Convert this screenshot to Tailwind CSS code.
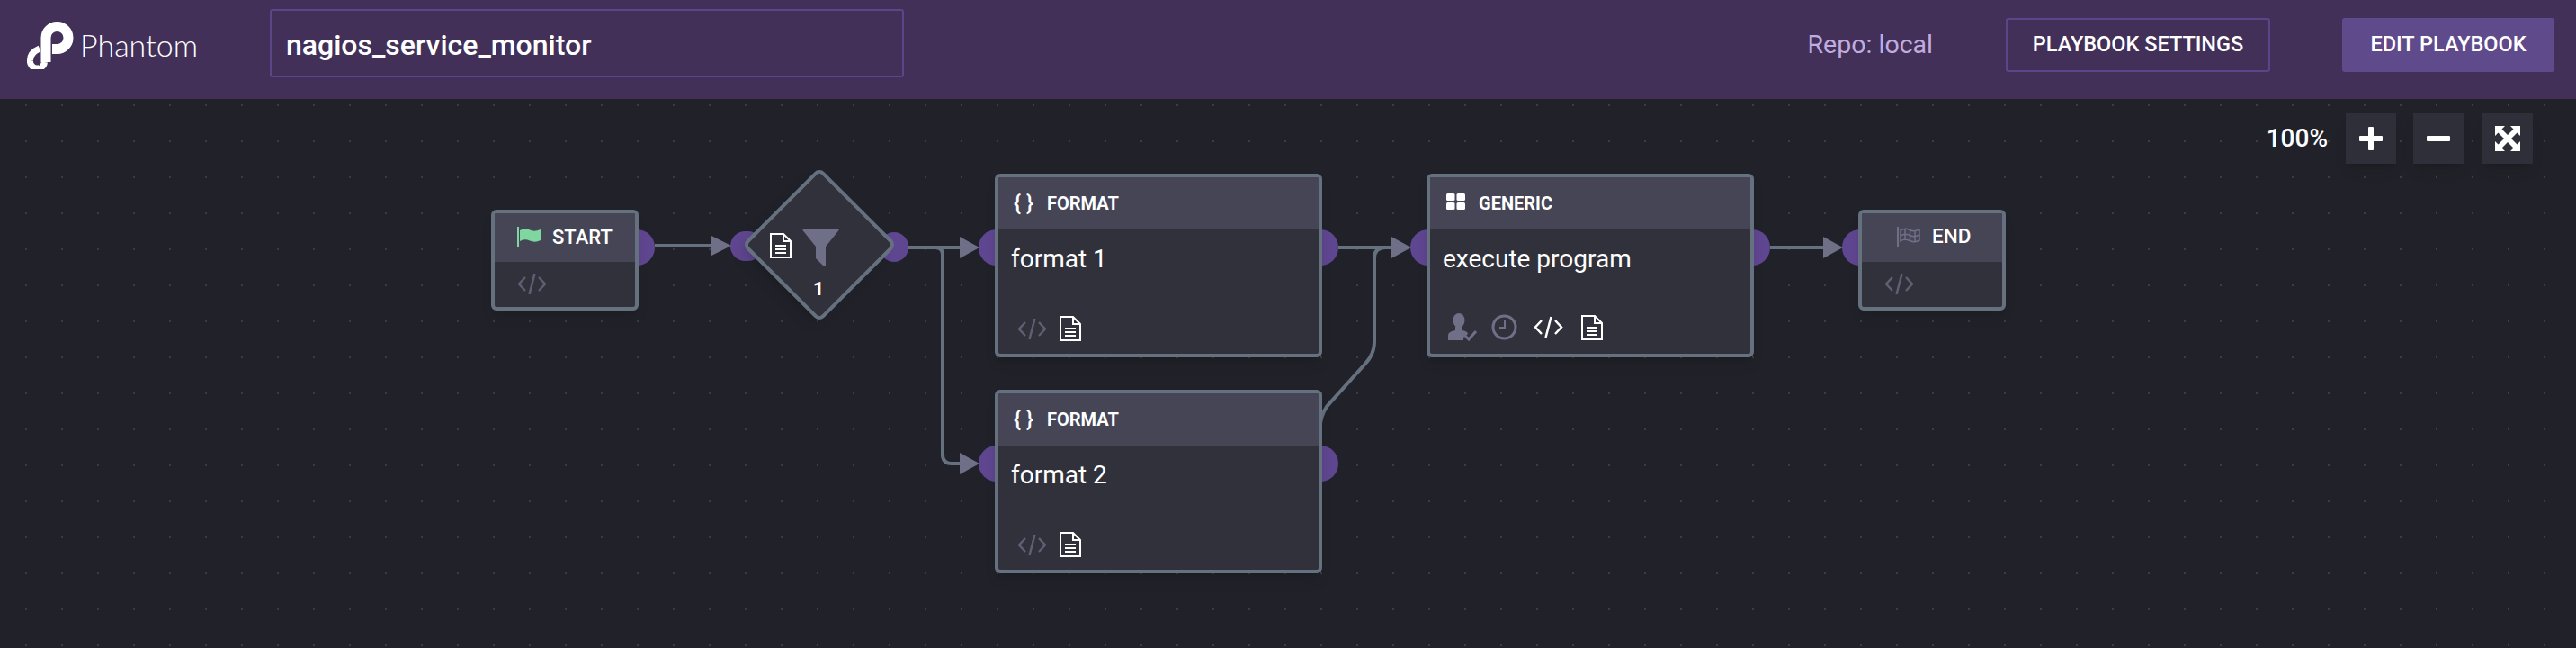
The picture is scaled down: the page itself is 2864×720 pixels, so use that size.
<!DOCTYPE html>
<html lang="en">
<head>
  <meta charset="UTF-8" />
  <title>Phantom playbook</title>
  <script src="https://cdn.jsdelivr.net/npm/@tailwindcss/browser@4"></script>
</head>
<body class="w-[2864px] h-[720px] overflow-hidden bg-[#212229] text-white font-['Roboto',sans-serif]">

  <!-- top bar -->
  <header class="h-[110px] bg-[#423059] flex items-center">
    <div class="w-[300px] shrink-0 flex items-center pl-[30px] mb-[10px]">
      <svg class="w-[52px] h-[54px] shrink-0" viewBox="0 0 52 54" fill="none" stroke="#fff">
        <path d="M3.500 44C3.500 38 7 34 14 31" stroke-width="7" />
        <path d="M3.500 44A8 8 0 0 0 19.500 46" stroke-width="7" />
        <path d="M21 46V19A12.500 12.500 0 1 1 33.500 31.500H28" stroke-width="11" />
        <path d="M13 36L14 50" stroke="#423059" stroke-width="1.500" />
      </svg>
      <span class="ml-[7px] text-[34px] leading-none font-light font-['Lato',sans-serif]">Phantom</span>
    </div>
    <div class="w-[705px] h-[76px] mb-[14px] border-2 border-[#5a4689] rounded-[3px] flex items-center pl-[16px] pt-[3px] text-[32px] font-medium">nagios_service_monitor</div>
    <span class="ml-auto mb-[10px] text-[#c0acdf] text-[28.500px]">Repo: local</span>
    <button class="ml-[81px] mb-[10px] w-[294px] h-[60px] border-2 border-[#5a4689] rounded-[3px] text-[23.500px] font-medium">PLAYBOOK SETTINGS</button>
    <button class="ml-[80px] mr-[24px] mb-[10px] w-[236px] h-[60px] bg-[#5f4b8b] rounded-[3px] text-[23.500px] font-medium">EDIT PLAYBOOK</button>
  </header>

  <!-- canvas -->
  <main class="relative h-[610px] bg-[radial-gradient(circle,#3b3d42_1px,transparent_1.5px)] bg-[size:40px_40px] bg-[position:9px_-13px]">

    <!-- zoom controls -->
    <div class="absolute top-[16px] right-[48px] flex items-center">
      <span class="mr-[20px] text-[28px] font-medium">100%</span>
      <button class="w-[56px] h-[56px] bg-[#2e2f38] shadow-lg flex items-center justify-center">
        <svg class="w-[26px] h-[26px]" viewBox="0 0 26 26" fill="#fff"><rect x="10" width="6" height="26" rx="1" /><rect y="10" width="26" height="6" rx="1" /></svg>
      </button>
      <button class="ml-[19px] w-[56px] h-[56px] bg-[#2e2f38] shadow-lg flex items-center justify-center">
        <svg class="w-[26px] h-[26px]" viewBox="0 0 26 26" fill="#fff"><rect y="10" width="26" height="6" rx="1" /></svg>
      </button>
      <button class="ml-[21px] w-[56px] h-[56px] bg-[#2e2f38] shadow-lg flex items-center justify-center">
        <svg class="w-[28px] h-[28px]" viewBox="0 0 28 28" fill="#fff">
          <path d="M0 0H11L7.500 3.500L14 10L20.500 3.500L17 0H28V11L24.500 7.500L18 14L24.500 20.500L28 17V28H17L20.500 24.500L14 18L7.500 24.500L11 28H0V17L3.500 20.500L10 14L3.500 7.500L0 11Z" />
        </svg>
      </button>
    </div>

    <!-- ports -->
    <div class="absolute left-[688px] top-[145px] w-[40px] h-[40px] rounded-full bg-[#5f4690]"></div>
    <div class="absolute left-[812px] top-[147px] w-[36px] h-[33px] rounded-full bg-[#5f4690]"></div>
    <div class="absolute left-[978px] top-[148px] w-[32px] h-[33px] rounded-full bg-[#5f4690]"></div>
    <div class="absolute left-[1088px] top-[145px] w-[40px] h-[40px] rounded-full bg-[#5f4690]"></div>
    <div class="absolute left-[1448px] top-[145px] w-[40px] h-[40px] rounded-full bg-[#5f4690]"></div>
    <div class="absolute left-[1088px] top-[385px] w-[40px] h-[40px] rounded-full bg-[#5f4690]"></div>
    <div class="absolute left-[1448px] top-[385px] w-[40px] h-[40px] rounded-full bg-[#5f4690]"></div>
    <div class="absolute left-[1568px] top-[145px] w-[40px] h-[40px] rounded-full bg-[#5f4690]"></div>
    <div class="absolute left-[1928px] top-[145px] w-[40px] h-[40px] rounded-full bg-[#5f4690]"></div>
    <div class="absolute left-[2048px] top-[145px] w-[40px] h-[40px] rounded-full bg-[#5f4690]"></div>

    <!-- connections -->
    <svg class="absolute left-0 top-0 w-[2864px] h-[610px]" viewBox="0 110 2864 610" fill="none" stroke="#667180" stroke-width="4">
      <path d="M728 273H795" />
      <path d="M1010 275H1070" />
      <path d="M1040 275Q1048 275 1048 283V505Q1048 515 1058 515H1070" />
      <path d="M1488 275H1550" />
      <path d="M1468 515V470Q1470 456 1480 446L1518 404Q1528 393 1528 380V287Q1528 275 1540 275H1550" />
      <path d="M1968 275H2030" />
      <g fill="#6f7088" stroke="none">
        <path d="M791 262L813 273L791 284Z" />
        <path d="M1067 263L1089 275L1067 287Z" />
        <path d="M1067 503L1089 515L1067 527Z" />
        <path d="M1547 263L1569 275L1547 287Z" />
        <path d="M2027 263L2049 275L2027 287Z" />
      </g>
    </svg>

    <!-- start -->
    <section class="absolute left-[546px] top-[123px] w-[164px] h-[112px] border-4 border-[#667180] rounded-[6px] bg-[#31313b] shadow-lg overflow-hidden">
      <div class="h-[54px] pb-[2px] bg-[#454556] flex items-center pl-[25px]">
        <svg class="w-[26px] h-[23px]" viewBox="0 0 26 23"><rect x="0" y="0" width="2" height="23" fill="#7fd6a0" /><path d="M3 4Q9 1 14 3.500T26 3V15Q20 18 14 15.500T3 16Z" fill="#7fd6a0" /></svg>
        <span class="ml-[13px] text-[22px] font-medium">START</span>
      </div>
      <div class="pl-[25px] pt-[12px]">
        <svg class="w-[33px] h-[25px]" viewBox="0 0 33 25" fill="none" stroke="#5e5f72" stroke-width="2.500"><path d="M9 5L2 12.500L9 20M24 5L31 12.500L24 20M19.500 1L13.500 24" /></svg>
      </div>
    </section>

    <!-- filter -->
    <section class="absolute left-[850px] top-[101px] w-[122px] h-[122px] rotate-45 border-4 border-[#667180] rounded-[8px] bg-[#31313b] shadow-lg"></section>
    <svg class="absolute left-[856px] top-[149px] w-[24px] h-[28px]" viewBox="0 0 24 28" fill="none" stroke="#fff" stroke-width="2"><path d="M1 1H15L23 9V27H1ZM15 1V9H23M6 14H18M6 18H18M6 22H18" /></svg>
    <svg class="absolute left-[892px] top-[145px] w-[41px] h-[41px]" viewBox="0 0 41 41" fill="#6f7088"><path d="M1 0H40Q41 0 40.500 1L26 19V40L25 41Q24 41 23 40L15 32V19L.500 1Q0 0 1 0Z" /></svg>
    <span class="absolute left-[904px] top-[198px] text-[21px] font-bold leading-[26px]">1</span>

    <!-- format 1 -->
    <section class="absolute left-[1106px] top-[83px] w-[364px] h-[204px] border-4 border-[#667180] rounded-[6px] bg-[#31313b] shadow-lg overflow-hidden flex flex-col">
      <div class="h-[58px] shrink-0 bg-[#454556] flex items-center pl-[17px]">
        <span class="w-[24px] text-[24px] leading-none font-medium whitespace-nowrap">{ }</span>
        <span class="ml-[13px] text-[20px] font-bold">FORMAT</span>
      </div>
      <p class="pl-[14px] pt-[15px] text-[28px] leading-[36px]">format 1</p>
      <div class="mt-auto mb-[14px] pl-[21px] flex items-center gap-[14px]">
        <svg class="w-[33px] h-[25px]" viewBox="0 0 33 25" fill="none" stroke="#5e5f72" stroke-width="2.500"><path d="M9 5L2 12.500L9 20M24 5L31 12.500L24 20M19.500 1L13.500 24" /></svg>
        <svg class="w-[24px] h-[28px]" viewBox="0 0 24 28" fill="none" stroke="#fff" stroke-width="2"><path d="M1 1H15L23 9V27H1ZM15 1V9H23M6 14H18M6 18H18M6 22H18" /></svg>
      </div>
    </section>

    <!-- format 2 -->
    <section class="absolute left-[1106px] top-[323px] w-[364px] h-[204px] border-4 border-[#667180] rounded-[6px] bg-[#31313b] shadow-lg overflow-hidden flex flex-col">
      <div class="h-[58px] shrink-0 bg-[#454556] flex items-center pl-[17px]">
        <span class="w-[24px] text-[24px] leading-none font-medium whitespace-nowrap">{ }</span>
        <span class="ml-[13px] text-[20px] font-bold">FORMAT</span>
      </div>
      <p class="pl-[14px] pt-[15px] text-[28px] leading-[36px]">format 2</p>
      <div class="mt-auto mb-[14px] pl-[21px] flex items-center gap-[14px]">
        <svg class="w-[33px] h-[25px]" viewBox="0 0 33 25" fill="none" stroke="#5e5f72" stroke-width="2.500"><path d="M9 5L2 12.500L9 20M24 5L31 12.500L24 20M19.500 1L13.500 24" /></svg>
        <svg class="w-[24px] h-[28px]" viewBox="0 0 24 28" fill="none" stroke="#fff" stroke-width="2"><path d="M1 1H15L23 9V27H1ZM15 1V9H23M6 14H18M6 18H18M6 22H18" /></svg>
      </div>
    </section>

    <!-- generic -->
    <section class="absolute left-[1586px] top-[83px] w-[364px] h-[204px] border-4 border-[#667180] rounded-[6px] bg-[#31313b] shadow-lg overflow-hidden flex flex-col">
      <div class="h-[58px] shrink-0 bg-[#454556] flex items-center pl-[18px]">
        <svg class="w-[21px] h-[18px] mb-[4px]" viewBox="0 0 21 18" fill="#fff"><rect width="9.500" height="8" rx="1.500" /><rect x="11.500" width="9.500" height="8" rx="1.500" /><rect y="10" width="9.500" height="8" rx="1.500" /><rect x="11.500" y="10" width="9.500" height="8" rx="1.500" /></svg>
        <span class="ml-[15px] text-[20px] font-bold">GENERIC</span>
      </div>
      <p class="pl-[14px] pt-[15px] text-[28px] leading-[36px]">execute program</p>
      <div class="mt-auto mb-[14px] pl-[20px] flex items-center">
        <svg class="w-[32px] h-[31px]" viewBox="0 0 32 31" fill="#6f7088">
          <ellipse cx="12" cy="8" rx="6.500" ry="8" />
          <path d="M8 15H16V19C20 20 22 21 22 23L17 27V30H0V25C0 21 4 20 8 19Z" />
          <path d="M19 25L23 29L31 20" fill="none" stroke="#6f7088" stroke-width="3" />
        </svg>
        <svg class="ml-[16px] w-[29px] h-[29px]" viewBox="0 0 29 29" fill="none" stroke="#6f7088" stroke-width="3"><circle cx="14.500" cy="14.500" r="12.500" /><path d="M15 7V15H9" stroke-width="2" /></svg>
        <svg class="ml-[18px] w-[33px] h-[25px]" viewBox="0 0 33 25" fill="none" stroke="#fff" stroke-width="2.500"><path d="M9 5L2 12.500L9 20M24 5L31 12.500L24 20M19.500 1L13.500 24" /></svg>
        <svg class="ml-[20px] w-[24px] h-[28px]" viewBox="0 0 24 28" fill="none" stroke="#fff" stroke-width="2"><path d="M1 1H15L23 9V27H1ZM15 1V9H23M6 14H18M6 18H18M6 22H18" /></svg>
      </div>
    </section>

    <!-- end -->
    <section class="absolute left-[2066px] top-[123px] w-[164px] h-[112px] border-4 border-[#667180] rounded-[6px] bg-[#31313b] shadow-lg overflow-hidden">
      <div class="h-[54px] pb-[2px] bg-[#454556] flex items-center pl-[39px]">
        <svg class="w-[26px] h-[23px]" viewBox="0 0 26 23" fill="none" stroke="#6f7088" stroke-width="1.500">
          <path d="M1 0V23" stroke-width="2" />
          <path d="M4 4Q9 1 14 3.500T25 3V15Q20 18 14 15.500T4 16ZM4 10Q9 7 14 9.500T25 9M9 3V15M14.500 4V16M20 4V16" />
        </svg>
        <span class="ml-[13px] text-[22.500px] font-medium">END</span>
      </div>
      <div class="pl-[25px] pt-[12px]">
        <svg class="w-[33px] h-[25px]" viewBox="0 0 33 25" fill="none" stroke="#5e5f72" stroke-width="2.500"><path d="M9 5L2 12.500L9 20M24 5L31 12.500L24 20M19.500 1L13.500 24" /></svg>
      </div>
    </section>
  </main>
</body>
</html>
